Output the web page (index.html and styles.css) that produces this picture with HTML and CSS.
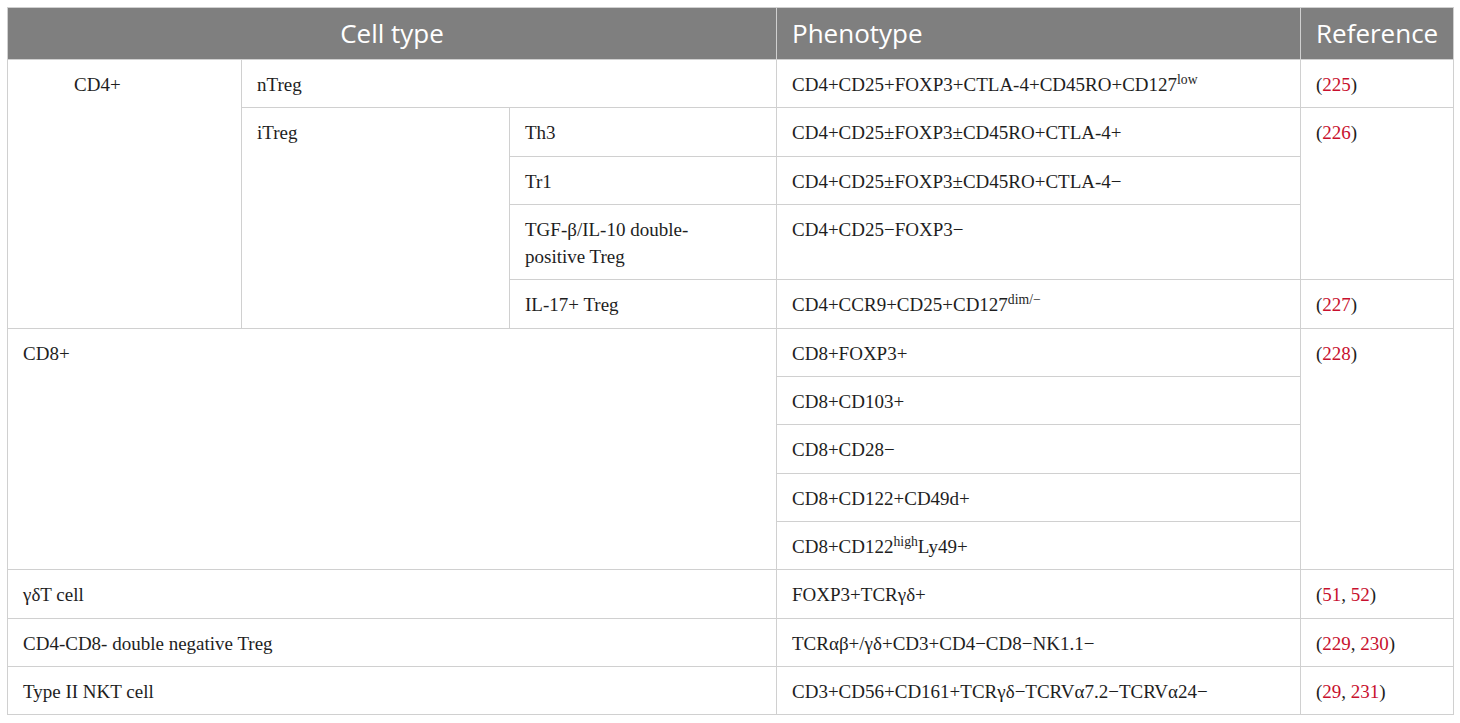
FILE: index.html
```html
<!DOCTYPE html>
<html lang="en">
<head>
<meta charset="utf-8">
<title>Treg subsets</title>
<link rel="stylesheet" href="styles.css">
</head>
<body>
<table class="tbl">
  <colgroup>
    <col class="c1"><col class="c2"><col class="c3"><col class="c4"><col class="c5">
  </colgroup>
  <thead>
    <tr>
      <th colspan="3" class="center">Cell type</th>
      <th>Phenotype</th>
      <th>Reference</th>
    </tr>
  </thead>
  <tbody>
    <tr>
      <td rowspan="5" class="cd4">CD4+</td>
      <td colspan="2">nTreg</td>
      <td>CD4+CD25+FOXP3+CTLA-4+CD45RO+CD127<sup>low</sup></td>
      <td>(<span class="ref">225</span>)</td>
    </tr>
    <tr>
      <td rowspan="4">iTreg</td>
      <td>Th3</td>
      <td>CD4+CD25±FOXP3±CD45RO+CTLA-4+</td>
      <td rowspan="3">(<span class="ref">226</span>)</td>
    </tr>
    <tr>
      <td>Tr1</td>
      <td>CD4+CD25±FOXP3±CD45RO+CTLA-4−</td>
    </tr>
    <tr>
      <td>TGF-β/IL-10 double-<br>positive Treg</td>
      <td>CD4+CD25−FOXP3−</td>
    </tr>
    <tr>
      <td>IL-17+ Treg</td>
      <td>CD4+CCR9+CD25+CD127<sup>dim/−</sup></td>
      <td>(<span class="ref">227</span>)</td>
    </tr>
    <tr>
      <td rowspan="5" colspan="3">CD8+</td>
      <td>CD8+FOXP3+</td>
      <td rowspan="5">(<span class="ref">228</span>)</td>
    </tr>
    <tr><td>CD8+CD103+</td></tr>
    <tr><td>CD8+CD28−</td></tr>
    <tr><td>CD8+CD122+CD49d+</td></tr>
    <tr><td>CD8+CD122<sup>high</sup>Ly49+</td></tr>
    <tr>
      <td colspan="3">γδT cell</td>
      <td>FOXP3+TCRγδ+</td>
      <td>(<span class="ref">51</span>, <span class="ref">52</span>)</td>
    </tr>
    <tr>
      <td colspan="3">CD4-CD8- double negative Treg</td>
      <td>TCRαβ+/γδ+CD3+CD4−CD8−NK1.1−</td>
      <td>(<span class="ref">229</span>, <span class="ref">230</span>)</td>
    </tr>
    <tr>
      <td colspan="3">Type II NKT cell</td>
      <td>CD3+CD56+CD161+TCRγδ−TCRVα7.2−TCRVα24−</td>
      <td>(<span class="ref">29</span>, <span class="ref">231</span>)</td>
    </tr>
  </tbody>
</table>
</body>
</html>
```
FILE: styles.css
```css
html, body {
  margin: 0;
  padding: 0;
  background: #ffffff;
}
body {
  padding: 7px 0 0 7px;
}
.tbl {
  border-collapse: collapse;
  table-layout: fixed;
  width: 1446px;
  font-family: "Liberation Serif", "Times New Roman", serif;
  font-size: 19px;
  color: #1e1e1e;
}
.c1 { width: 234px; }
.c2 { width: 268px; }
.c3 { width: 267px; }
.c4 { width: 524px; }
.c5 { width: 153px; }
.tbl th, .tbl td {
  border: 1px solid #d0d0d0;
  text-align: left;
  vertical-align: top;
}
.tbl th {
  background: #7f7f7f;
  color: #ffffff;
  font-family: "Open Sans", "DejaVu Sans", sans-serif;
  font-weight: 400;
  font-size: 26px;
  line-height: 32px;
  padding: 9px 15px 10px 15px;
}
.tbl th.center {
  text-align: center;
}
.tbl td {
  line-height: 27.3px;
  padding: 11px 15px 9px 15px;
}
.tbl td.cd4 {
  padding-left: 66px;
}
.tbl sup {
  font-size: 0.72em;
  line-height: 0;
  vertical-align: 0.5em;
}
.ref {
  color: #c8102e;
}
```
